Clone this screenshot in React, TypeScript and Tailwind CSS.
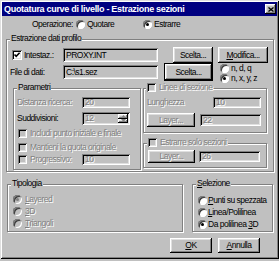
import React from "react";

const raised =
  "shadow-[inset_-1px_-1px_0_#000,inset_1px_1px_0_#fff,inset_-2px_-2px_0_#808080,inset_2px_2px_0_#dfdfdf]";
const sunken =
  "shadow-[inset_1px_1px_0_#808080,inset_-1px_-1px_0_#fff,inset_2px_2px_0_#000,inset_-2px_-2px_0_#dfdfdf]";
const etched = "border border-[#808080] shadow-[inset_1px_1px_0_#fff,1px_1px_0_#fff]";
const dis = "text-[#808080] [text-shadow:1px_1px_0_#fff]";

function Btn({
  children,
  className = "",
  disabled = false,
}: {
  children: React.ReactNode;
  className?: string;
  disabled?: boolean;
}) {
  return (
    <div
      className={`flex shrink-0 items-center justify-center bg-[#c0c0c0] ${raised} ${
        disabled ? dis : ""
      } ${className}`}
    >
      {children}
    </div>
  );
}

function TB({
  value,
  className = "",
  disabled = false,
}: {
  value: string;
  className?: string;
  disabled?: boolean;
}) {
  return (
    <div
      className={`flex shrink-0 items-center pl-[3px] bg-[#c0c0c0] ${sunken} ${
        disabled ? dis : ""
      } ${className}`}
    >
      {value}
    </div>
  );
}

function CB({
  checked = false,
  disabled = false,
  className = "",
}: {
  checked?: boolean;
  disabled?: boolean;
  className?: string;
}) {
  return (
    <div
      className={`relative shrink-0 ${sunken} ${
        disabled ? "bg-[#c0c0c0]" : "bg-white"
      } ${className}`}
    >
      {checked && (
        <svg className="absolute inset-0" viewBox="0 0 10 10">
          <path d="M2.5 4.5 L4.2 6.4 L7.6 2.8" stroke="#000" strokeWidth="1.6" fill="none" />
        </svg>
      )}
    </div>
  );
}

function Radio({ checked = false, disabled = false }: { checked?: boolean; disabled?: boolean }) {
  return (
    <div
      className={`relative shrink-0 w-[9px] h-[9px] rounded-full ${
        disabled ? "bg-[#c0c0c0]" : "bg-white"
      } shadow-[inset_1px_1px_0_#808080,inset_-1px_-1px_0_#fff,inset_2px_2px_0_#404040]`}
    >
      {checked && (
        <div
          className={`absolute left-[3px] top-[3px] w-[3px] h-[3px] rounded-full ${
            disabled ? "bg-[#808080]" : "bg-black"
          }`}
        />
      )}
    </div>
  );
}

export default function App() {
  return (
    <div className="w-[279px] h-[261px] bg-[#c0c0c0] font-['Liberation_Sans',Arial,sans-serif] text-[8.5px] leading-none tracking-[-0.5px] text-black">
      <div className="w-[279px] h-[259px] flex flex-col shadow-[inset_1px_1px_0_#dfdfdf,inset_-1px_-1px_0_#000,inset_2px_2px_0_#fff,inset_-2px_-2px_0_#808080]">
        {/* Title bar */}
        <div className="mx-[2px] mt-[2px] h-[14px] bg-[#000080] flex items-center justify-between">
          <span className="pl-[2px] text-white font-bold text-[9px] tracking-[-0.3px]">
            Quotatura curve di livello - Estrazione sezioni
          </span>
          <div className={`mr-[1px] w-[11px] h-[10px] bg-[#c0c0c0] ${raised} flex items-center justify-center`}>
            <svg width="6" height="5" viewBox="0 0 6 5">
              <path d="M0.5 0.5 L5.5 4.5 M5.5 0.5 L0.5 4.5" stroke="#000" strokeWidth="1.3" />
            </svg>
          </div>
        </div>

        {/* Operazione */}
        <div className="h-[16px] flex items-center">
          <span className="ml-[32px] w-[44px]">Operazione:</span>
          <div className="flex items-center w-[67px]">
            <Radio />
            <span className="ml-[2px]">Quotare</span>
          </div>
          <div className="flex items-center">
            <Radio checked />
            <span className="ml-[2px]">Estrarre</span>
          </div>
        </div>

        {/* Estrazione dati profilo */}
        <div className={`relative ml-[6px] mt-[7px] w-[268px] h-[133px] ${etched}`}>
          <span className="absolute -top-[6px] left-[3px] bg-[#c0c0c0] px-[1px] leading-[9px]">
            Estrazione dati profilo
          </span>

          <div className="flex items-center mt-[7px] h-[16px]">
            <div className="w-[56px] flex items-center">
              <CB checked className="w-[10px] h-[10px] ml-[5px]" />
              <span className="ml-[2px]">Intestaz.:</span>
            </div>
            <TB className="w-[95px] h-[14px]" value="PROXY.INT" />
            <Btn className="ml-[15px] w-[40px] h-[16px]">Scelta...</Btn>
            <Btn className="ml-[5px] w-[50px] h-[16px]">
              <span>
                <u>M</u>odifica...
              </span>
            </Btn>
          </div>

          <div className="flex items-center h-[18px]">
            <div className="w-[56px] pl-[3px]">File di dati:</div>
            <TB className="w-[95px] h-[14px]" value="C:\s1.sez" />
            <Btn className="ml-[6px] w-[49px] h-[18px] border border-black">Scelta...</Btn>
            <div className="ml-[7px] self-start flex flex-col">
              <div className="h-[10px] flex items-center">
                <Radio />
                <span className="ml-[2px]">n, d, q</span>
              </div>
              <div className="h-[10px] flex items-center">
                <Radio checked />
                <span className="ml-[2px]">n, x, y, z</span>
              </div>
            </div>
          </div>

          <div className="flex mt-[7px]">
            {/* Parametri */}
            <div className={`relative ml-[6px] w-[128px] h-[82px] ${etched}`}>
              <span className="absolute -top-[6px] left-[3px] bg-[#c0c0c0] px-[1px] leading-[9px]">
                Parametri
              </span>
              <div className="flex items-center mt-[8px] h-[11px] pl-[3px]">
                <span className={`w-[65px] ${dis}`}>Distanza ricerca:</span>
                <TB disabled className="w-[48px] h-[11px]" value="20" />
              </div>
              <div className="flex items-center mt-[4px] h-[13px] pl-[3px]">
                <span className="w-[65px]">Suddivisioni:</span>
                <div className={`relative shrink-0 w-[48px] h-[13px] bg-[#c0c0c0] ${sunken} flex items-center pl-[3px] ${dis}`}>
                  12
                  <div className="absolute right-[2px] top-[2px] bottom-[2px] w-[10px] flex flex-col">
                    <div className={`flex-1 bg-[#c0c0c0] ${raised} flex items-center justify-center`}>
                      <svg width="5" height="3" viewBox="0 0 5 3">
                        <path d="M0 3 L2.5 0 L5 3Z" fill="#808080" />
                      </svg>
                    </div>
                    <div className={`flex-1 bg-[#c0c0c0] ${raised} flex items-center justify-center`}>
                      <svg width="5" height="3" viewBox="0 0 5 3">
                        <path d="M0 0 L2.5 3 L5 0Z" fill="#808080" />
                      </svg>
                    </div>
                  </div>
                </div>
              </div>
              <div className="flex items-center mt-[3px] h-[10px] pl-[4px]">
                <CB disabled className="w-[9px] h-[9px]" />
                <span className={`ml-[3px] ${dis}`}>Includi punto iniziale e finale</span>
              </div>
              <div className="flex items-center mt-[4px] h-[10px] pl-[4px]">
                <CB disabled className="w-[9px] h-[9px]" />
                <span className={`ml-[3px] ${dis}`}>Mantieni la quota originale</span>
              </div>
              <div className="flex items-center mt-[2px] h-[11px] pl-[4px]">
                <div className="w-[64px] flex items-center">
                  <CB disabled className="w-[9px] h-[9px]" />
                  <span className={`ml-[3px] ${dis}`}>Progressivo:</span>
                </div>
                <TB disabled className="w-[48px] h-[11px]" value="10" />
              </div>
            </div>

            {/* Right column */}
            <div className="ml-[2px] w-[124px] flex flex-col">
              <div className={`relative h-[45px] ${etched}`}>
                <div className="absolute -top-[6px] left-[2px] bg-[#c0c0c0] px-[1px] h-[9px] flex items-center">
                  <CB disabled className="w-[9px] h-[9px]" />
                  <span className={`ml-[3px] ${dis}`}>Linee di sezione</span>
                </div>
                <div className="flex items-center mt-[8px] h-[11px] pl-[3px]">
                  <span className={`w-[66px] ${dis}`}>Lunghezza</span>
                  <TB disabled className="w-[48px] h-[11px]" value="10" />
                </div>
                <div className="flex items-center mt-[5px] h-[14px] pl-[3px]">
                  <Btn disabled className="w-[48px] h-[14px]">
                    Layer...
                  </Btn>
                  <TB disabled className="ml-[5px] w-[61px] h-[12px]" value="22" />
                </div>
              </div>
              <div className={`relative mt-[10px] h-[25px] ${etched}`}>
                <div className="absolute -top-[6px] left-[3px] bg-[#c0c0c0] px-[1px] h-[9px] flex items-center">
                  <CB disabled className="w-[9px] h-[9px]" />
                  <span className={`ml-[3px] ${dis}`}>Estrarre solo sezioni</span>
                </div>
                <div className="flex items-center mt-[6px] h-[13px] pl-[4px]">
                  <Btn disabled className="w-[47px] h-[13px]">
                    Layer...
                  </Btn>
                  <TB disabled className="ml-[4px] w-[61px] h-[11px]" value="26" />
                </div>
              </div>
            </div>
          </div>
        </div>

        {/* Tipologia / Selezione */}
        <div className="flex mt-[12px]">
          <div className={`relative ml-[7px] w-[176px] h-[48px] ${etched}`}>
            <span className="absolute -top-[6px] left-[3px] bg-[#c0c0c0] px-[1px] leading-[9px]">
              Tipologia
            </span>
            <div className="mt-[8px] pl-[5px] flex flex-col">
              <div className="h-[12px] flex items-center">
                <Radio checked disabled />
                <span className={`ml-[3px] ${dis}`}>
                  <u>L</u>ayered
                </span>
              </div>
              <div className="h-[12px] flex items-center">
                <Radio disabled />
                <span className={`ml-[3px] ${dis}`}>
                  <u>3</u>D
                </span>
              </div>
              <div className="h-[12px] flex items-center">
                <Radio disabled />
                <span className={`ml-[3px] ${dis}`}>
                  <u>T</u>riangoli
                </span>
              </div>
            </div>
          </div>
          <div className={`relative ml-[9px] w-[81px] h-[48px] ${etched}`}>
            <span className="absolute -top-[6px] left-[3px] bg-[#c0c0c0] px-[1px] leading-[9px]">
              <u>S</u>elezione
            </span>
            <div className="mt-[9px] pl-[5px] flex flex-col">
              <div className="h-[12px] flex items-center">
                <Radio />
                <span className="ml-[1px]">
                  <u>P</u>unti su spezzata
                </span>
              </div>
              <div className="h-[12px] flex items-center">
                <Radio />
                <span className="ml-[1px]">
                  <u>L</u>inea/Polilinea
                </span>
              </div>
              <div className="h-[12px] flex items-center">
                <Radio checked />
                <span className="ml-[1px]">
                  Da polilinea <u>3</u>D
                </span>
              </div>
            </div>
          </div>
        </div>

        {/* Buttons */}
        <div className="flex mt-[6px]">
          <Btn className="ml-[170px] w-[42px] h-[15px]">
            <span>
              <u>O</u>K
            </span>
          </Btn>
          <Btn className="ml-[6px] w-[42px] h-[15px]">
            <span>
              <u>A</u>nnulla
            </span>
          </Btn>
        </div>
      </div>
    </div>
  );
}
